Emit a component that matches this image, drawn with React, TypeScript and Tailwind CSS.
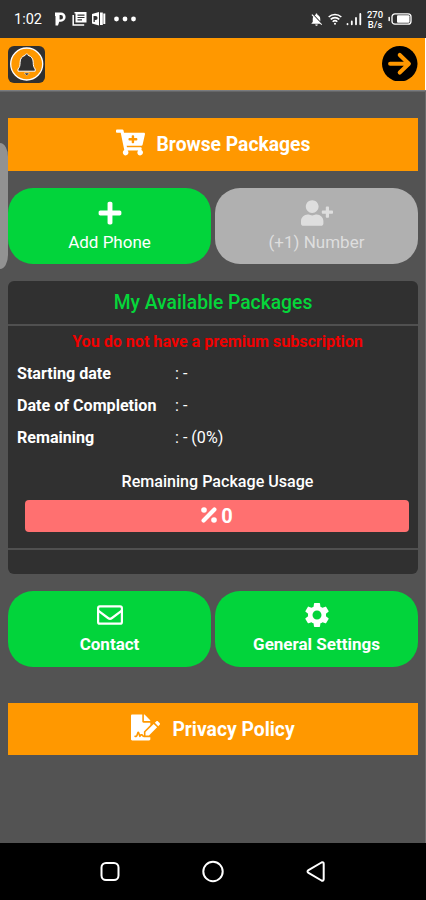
import React from "react";
import { FaCartPlus, FaPlus, FaUserPlus, FaFileSignature } from "react-icons/fa";
import { MdSettings, MdNotificationsOff } from "react-icons/md";

const tile =
  "flex h-[76.5px] flex-1 flex-col items-center rounded-[25px] text-[17px] leading-5";

function StatusBar() {
  return (
    <div className="flex h-[38px] items-center bg-[#303030] pl-[14px] text-white">
      <span className="mt-[2px] w-[29px] text-[14.5px] leading-none whitespace-nowrap">1:02</span>
      <svg className="ml-[11px]" width="86" height="16" viewBox="0 0 86 16" fill="none">
        <path fill="#fff" fillRule="evenodd" d="M1 1.500h6a4.600 4.600 0 0 1 0 9.200H5.200L4 14.500H1.500V5H1zM5.600 4v4.400h1.200a2.200 2.200 0 0 0 0-4.400z" />
        <path stroke="#fff" strokeWidth="1.5" d="M19.200 4v10h11" />
        <path fill="#fff" fillRule="evenodd" d="M20.500 1h12v10.500H21.500V2.500h-1zM23.500 3.500v1.200h7V3.500zm0 2.400v1.200h7V5.900zm0 2.400v1.200h4.500V8.300z" />
        <path fill="#fff" fillRule="evenodd" d="M38 3l7-2v13.500l-7-2zM39.500 5v6h1.300V9h.8a2 2 0 0 0 0-4zM46 1.500h2.800v12.500H46zM49.300 2.500h2v10.500h-2z" />
        <circle cx="62.500" cy="8" r="2.400" fill="#fff" />
        <circle cx="71" cy="8" r="2.400" fill="#fff" />
        <circle cx="79.500" cy="8" r="2.400" fill="#fff" />
      </svg>
      <MdNotificationsOff className="ml-[168.5px]" size={15} />
      <svg className="ml-[4.5px]" width="36" height="14" viewBox="0 0 36 14" fill="none" stroke="#fff">
        <path strokeWidth="1.6" d="M.7 5a9 9 0 0 1 12.600 0M2.700 7.400a6.200 6.200 0 0 1 8.600 0M4.700 9.700a3.300 3.300 0 0 1 4.600 0" />
        <circle cx="7" cy="11.800" r="1" fill="#fff" stroke="none" />
        <path strokeWidth="1.8" strokeLinecap="round" d="M19.500 12v.3M23.800 9.500v2.800M28 6v6.300M32.300 2v10.300" />
      </svg>
      <span className="ml-[1px] w-[20px] pt-px text-center text-[9.5px] leading-[9.5px] font-medium">270<br />B/s</span>
      <svg className="ml-[3px]" width="24" height="12" viewBox="0 0 24 12" fill="none">
        <path stroke="#fff" strokeWidth="1.500" strokeLinecap="round" d="M1.200 4.500v3" />
        <rect x="4" y=".8" width="19" height="10.400" rx="3" stroke="#fff" strokeWidth="1.300" />
        <rect x="9" y="2.300" width="12.500" height="7.400" rx="1" fill="#fff" />
      </svg>
    </div>
  );
}

function Header() {
  return (
    <header className="flex h-[52px] items-center justify-between border-r border-white bg-[#ff9800] pr-[7.500px] pl-[8px]">
      <svg className="mt-px" width="37" height="37" viewBox="0 0 37 37">
        <rect width="37" height="37" rx="6" fill="#303030" />
        <circle cx="18.700" cy="18" r="16" fill="#ff9800" stroke="#fff" strokeWidth="1.300" />
        <path fill="#303030" stroke="#fff" strokeWidth="1" d="M18.700 8c.9 0 1.500.6 1.500 1.400 3.300.8 5 3.600 5 6.800 0 4 .6 5 2 6.800v2.200H10V23c1.500-1.700 2.100-2.800 2.100-6.800 0-3.200 1.800-6 5-6.800 0-.8.7-1.400 1.600-1.400z" />
        <path fill="#303030" stroke="#fff" strokeWidth=".5" d="M16.300 27h5l-2.500 2.700z" />
      </svg>
      <svg className="-mt-px" width="35.5" height="35.5" viewBox="0 0 35 35" fill="none">
        <circle cx="17.500" cy="17.500" r="17.500" fill="#000" />
        <path stroke="#ff9800" strokeWidth="4" strokeLinecap="round" strokeLinejoin="round" d="M8 17.500h18M17.500 8.800l9 8.700-9 8.700" />
      </svg>
    </header>
  );
}

function Row({ label, value }: { label: string; value: string }) {
  return (
    <div className="flex h-8 items-center pt-px text-[16.1px]">
      <span className="w-[158px] font-bold">{label}</span>
      <span>{value}</span>
    </div>
  );
}

function PackagesCard() {
  return (
    <section className="mt-[16.5px] flex h-[293px] flex-col rounded-[6px] bg-[#303030]">
      <h2 className="h-[43px] text-center text-[19.3px] leading-[43px] font-medium text-[#05d63a]">My Available Packages</h2>
      <div className="h-[2px] shrink-0 bg-[#505050]" />
      <div className="pl-[9px]">
        <p className="h-[32px] text-center text-[16.1px] leading-[32px] font-bold text-[#f00000]">
          You do not have a premium subscription
        </p>
        <Row label="Starting date" value=": -" />
        <Row label="Date of Completion" value=": -" />
        <Row label="Remaining" value=": - (0%)" />
      </div>
      <p className="mt-[17px] h-[29px] pl-[9px] text-center text-[16.1px] leading-[22px] font-medium">Remaining Package Usage</p>
      <div className="mr-[9px] ml-[17px] flex h-[32px] shrink-0 items-center justify-center gap-[4px] rounded-[4px] bg-[#ff7070] text-[20px] font-bold">
        <svg className="-mt-[2px]" width="16" height="16" viewBox="0 0 16 16" fill="#fff">
          <circle cx="3" cy="3" r="2.800" />
          <circle cx="13" cy="13" r="2.800" />
          <path stroke="#fff" strokeWidth="4.200" strokeLinecap="round" d="M2.600 13.400 13.400 2.600" />
        </svg>
        <span className="leading-none">0</span>
      </div>
      <div className="mt-4 h-[2px] shrink-0 bg-[#505050]" />
    </section>
  );
}

function NavBar() {
  return (
    <nav className="flex h-[57px] items-center bg-black pl-[99px]">
      <svg width="230" height="24" viewBox="0 0 230 24" fill="none" stroke="#fff" strokeWidth="2">
        <rect x="2.500" y="3" width="17" height="17" rx="4.500" />
        <circle cx="114" cy="11.500" r="9.700" />
        <path strokeLinejoin="round" d="M209.500 10.200 222.500 2.500c1.200-.6 2.200 0 2.200 1.200v15.600c0 1.200-1 1.800-2.200 1.200l-13-7.700c-1.300-.8-1.300-1.800 0-2.600z" />
      </svg>
    </nav>
  );
}

export default function App() {
  return (
    <div className="relative flex h-[900px] w-[426px] flex-col overflow-hidden bg-[#535353] font-[Roboto,sans-serif] text-white">
      <StatusBar />
      <Header />
      <div className="h-[2px] bg-gradient-to-b from-[#84878c] to-[#5c5c5c]" />
      <main className="flex flex-1 flex-col border-r border-[#6c6c6c] pt-[26.400px] pr-[7px] pl-2">
        <div className="flex h-[52.600px] items-center justify-center bg-[#ff9800] pt-[2px] text-[19.300px] font-bold">
          <FaCartPlus className="mr-[12px] -mt-[7px]" size={29} />
          Browse Packages
        </div>
        <div className="mt-[17px] flex gap-1">
          <div className={`${tile} bg-[#02d43b]`}>
            <FaPlus className="mt-[12px] mb-[6px]" size={26} />
            <span>Add Phone</span>
          </div>
          <div className={`${tile} bg-[#b0b0b0] text-[#dedede]`}>
            <FaUserPlus className="mt-[9px] mb-[3px]" size={32} />
            <span>(+1) Number</span>
          </div>
        </div>
        <PackagesCard />
        <div className="mt-[17px] flex gap-1 font-bold">
          <div className={`${tile} bg-[#02d43b]`}>
            <svg className="mt-[14px] mb-[9px]" width="26" height="20" viewBox="0 0 26 20" fill="none" stroke="#fff" strokeWidth="2.200" strokeLinejoin="round">
              <rect x="1.100" y="1.300" width="23.800" height="17.400" rx="1.800" />
              <path d="M1.500 5.800 11 13q2 1.500 4 0l9.500-7.200" />
            </svg>
            <span>Contact</span>
          </div>
          <div className={`${tile} bg-[#02d43b]`}>
            <MdSettings className="mt-[9px] mb-[4px]" size={30} />
            <span>General Settings</span>
          </div>
        </div>
        <div className="mt-[35.500px] flex h-[52.500px] items-center justify-center bg-[#ff9800] pt-[2px] text-[19.300px] font-bold">
          <FaFileSignature className="mr-[12px] -mt-[6px]" size={29} />
          Privacy Policy
        </div>
      </main>
      <NavBar />
      <div className="absolute top-[143px] left-0 h-[126px] w-[8px] bg-[#929292] [border-radius:0_8px_8px_0/0_14px_14px_0]" />
    </div>
  );
}
